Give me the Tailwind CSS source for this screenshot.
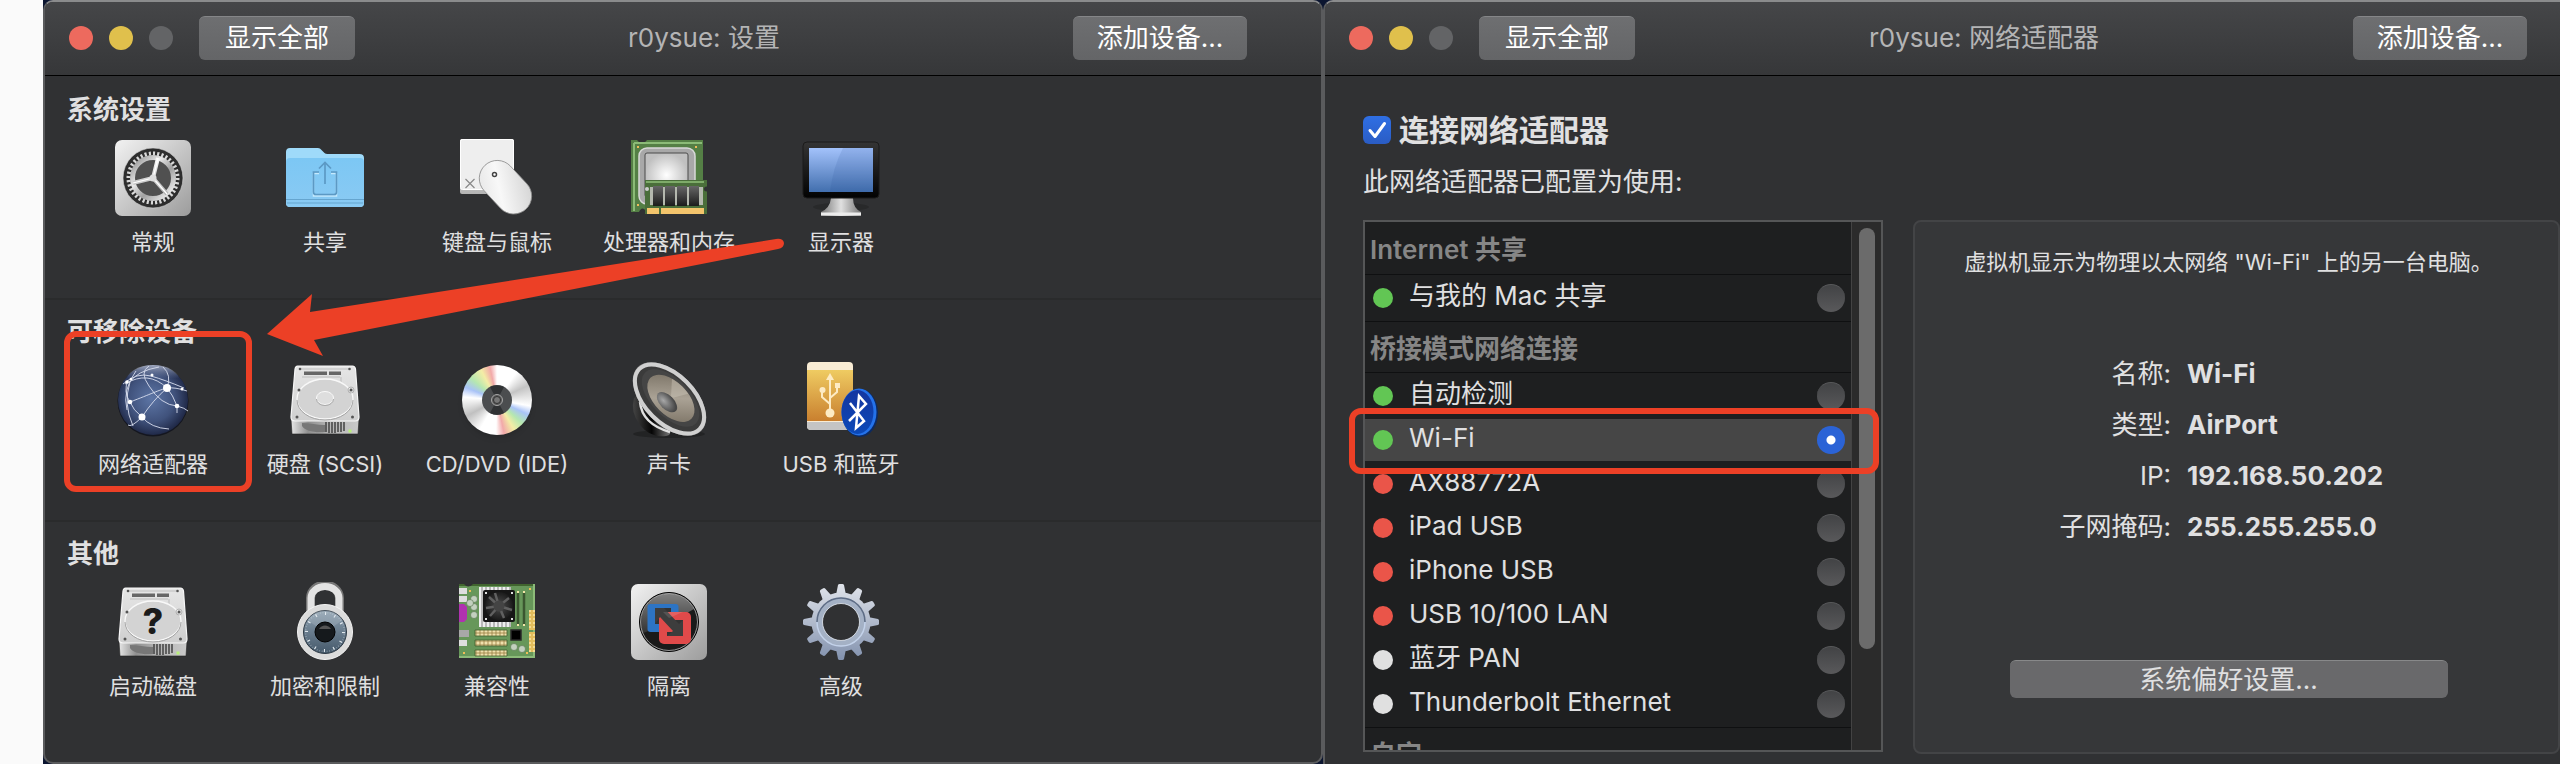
<!DOCTYPE html>
<html lang="zh-CN">
<head>
<meta charset="utf-8">
<meta name="viewport" content="width=device-width, initial-scale=1">
<title>r0ysue: 设置</title>
<script src="https://cdn.jsdelivr.net/npm/@tailwindcss/browser@4"></script>
</head>
<body class="flex min-h-screen overflow-x-hidden bg-[#0b1530] font-[Inter,'Noto_Sans_CJK_SC',sans-serif] text-[#e0e0e1]">

<!-- Shared gradients and symbols -->
<svg class="absolute size-0" aria-hidden="true">
  <defs>
    <linearGradient id="plate" x1="0" y1="0" x2="1" y2="1"><stop offset="0" stop-color="#f2f2f2"/><stop offset="1" stop-color="#9c9c9c"/></linearGradient>
    <linearGradient id="metal" x1="0" y1="0" x2="0" y2="1"><stop offset="0" stop-color="#fafafa"/><stop offset="1" stop-color="#b4b4b4"/></linearGradient>
    <linearGradient id="mouse" x1="0" y1="1" x2="1" y2="0"><stop offset="0" stop-color="#e4e4e4"/><stop offset=".4" stop-color="#f8f8f8"/><stop offset="1" stop-color="#cfcfcf"/></linearGradient>
    <linearGradient id="wheel" x1="0" y1="0" x2="1" y2="1"><stop offset="0" stop-color="#8a8a8a"/><stop offset=".35" stop-color="#e8e8e8"/><stop offset=".6" stop-color="#a0a0a0"/><stop offset="1" stop-color="#fff"/></linearGradient>
    <linearGradient id="folder" x1="0" y1="0" x2="0" y2="1"><stop offset="0" stop-color="#7cc7f4"/><stop offset="1" stop-color="#8acaf3"/></linearGradient>
    <linearGradient id="screen" x1="0" y1="0" x2="0" y2="1"><stop offset="0" stop-color="#a3c2fb"/><stop offset="1" stop-color="#426fae"/></linearGradient>
    <linearGradient id="bezel" x1="0" y1="0" x2="0" y2="1"><stop offset="0" stop-color="#343434"/><stop offset="1" stop-color="#020202"/></linearGradient>
    <linearGradient id="stand" x1="0" y1="0" x2="1" y2="0"><stop offset="0" stop-color="#777"/><stop offset=".5" stop-color="#e0e0e0"/><stop offset="1" stop-color="#777"/></linearGradient>
    <radialGradient id="die"><stop offset="0" stop-color="#fff"/><stop offset="1" stop-color="#c0c0c0"/></radialGradient>
    <linearGradient id="chip" x1="0" y1="0" x2="0" y2="1"><stop offset="0" stop-color="#666"/><stop offset="1" stop-color="#1c1c1c"/></linearGradient>
    <radialGradient id="globe" cx=".48" cy=".48" r=".55"><stop offset="0" stop-color="#5d76a6"/><stop offset=".6" stop-color="#40527c"/><stop offset="1" stop-color="#1b2340"/></radialGradient>
    <linearGradient id="globeTop" x1="0" y1="0" x2="0" y2="1"><stop offset="0" stop-color="#d7def0" stop-opacity=".7"/><stop offset=".4" stop-color="#8fa0c8" stop-opacity="0"/></linearGradient>
    <linearGradient id="disk" x1="0" y1="0" x2="0" y2="1"><stop offset="0" stop-color="#e6e6e6"/><stop offset="1" stop-color="#cfcfcf"/></linearGradient>
    <linearGradient id="diskFront" x1="0" y1="0" x2="1" y2="0"><stop offset="0" stop-color="#e6e6e6"/><stop offset=".25" stop-color="#8f8f8f"/><stop offset=".55" stop-color="#b4b4b4"/><stop offset="1" stop-color="#c9c9c9"/></linearGradient>
    <linearGradient id="cone" x1="0" y1=".2" x2="1" y2=".8"><stop offset="0" stop-color="#7a7265"/><stop offset=".5" stop-color="#aaa295"/><stop offset="1" stop-color="#7d7466"/></linearGradient>
    <radialGradient id="cap" cx=".35" cy=".6" r=".6"><stop offset="0" stop-color="#a8a8a8"/><stop offset="1" stop-color="#484848"/></radialGradient>
    <linearGradient id="magnet" x1="0" y1="0" x2="1" y2="0"><stop offset="0" stop-color="#444"/><stop offset=".5" stop-color="#050505"/><stop offset="1" stop-color="#777"/></linearGradient>
    <linearGradient id="usb" x1="0" y1="0" x2="0" y2="1"><stop offset="0" stop-color="#efcb62"/><stop offset="1" stop-color="#c9802f"/></linearGradient>
    <linearGradient id="bt" x1="0" y1="0" x2="0" y2="1"><stop offset="0" stop-color="#1436a0"/><stop offset="1" stop-color="#0b49b8"/></linearGradient>
    <linearGradient id="dial" x1="0" y1="0" x2="0" y2="1"><stop offset="0" stop-color="#8da0b0"/><stop offset="1" stop-color="#44586a"/></linearGradient>
    <linearGradient id="steel" x1="0" y1="0" x2="0" y2="1"><stop offset="0" stop-color="#e3e6ec"/><stop offset="1" stop-color="#7f8fac"/></linearGradient>
    <radialGradient id="fan"><stop offset="0" stop-color="#555"/><stop offset=".35" stop-color="#3c3c3c"/><stop offset="1" stop-color="#1b1b1b"/></radialGradient>
    <linearGradient id="glass" x1="0" y1="0" x2="0" y2="1"><stop offset="0" stop-color="#fff" stop-opacity=".45"/><stop offset="1" stop-color="#fff" stop-opacity=".1"/></linearGradient>
    <pattern id="pins" width="4" height="4" patternUnits="userSpaceOnUse"><rect width="4" height="4" fill="#cdb980"/><rect width="2" height="2" fill="#efe0ae"/><rect x="2" y="2" width="2" height="2" fill="#b5a069"/></pattern>
    <pattern id="pinsGold" width="4" height="4" patternUnits="userSpaceOnUse"><rect width="4" height="4" fill="#e3bd5c"/><rect width="2" height="2" fill="#f4db93"/></pattern>
    <symbol id="drive" viewBox="0 0 80 80">
      <path d="M6 59h68l-1 15H7z" fill="url(#diskFront)" stroke="#222" stroke-width=".6"/>
      <path d="M17 63c8 0 15 2 23 2v7c-10 1-20-1-23-6z" fill="#777"/>
      <g stroke="#3a3a3a" stroke-width="1.4"><path d="M41 62v10M44 62v11M47 62v11M50 62v11M53 62v10M56 62v10M59 62v9"/></g>
      <path d="M12.500 6h55Q70 6 70.500 9L74 57Q74 61 70 61H10Q6 61 6 57L10 9Q10.500 6 12.500 6z" fill="url(#disk)" stroke="#f7f7f7" stroke-width="1.200"/>
      <path d="M16 9h47M17 17h38M56 17v8" stroke="#bdbdbd" fill="none"/>
      <path d="M19 11.500h23v3.500H19zM44 11.500h12v3.500H44z" fill="#666"/>
      <ellipse cx="40" cy="39" rx="28" ry="20" fill="#d3d3d3" stroke="#f8f8f8" stroke-width="1.300"/>
      <path d="M12 40a28 20 0 0 0 56 0" fill="none" stroke="#a3a3a3"/>
      <g fill="#555"><circle cx="15" cy="9" r="1.300"/><circle cx="64.500" cy="9" r="1.300"/><circle cx="14" cy="30" r="1.500"/><circle cx="66" cy="30" r="1.500"/><circle cx="12" cy="57" r="1.500"/><circle cx="67.500" cy="57" r="1.500"/></g>
      <circle cx="66" cy="30" r="3" fill="none" stroke="#aaa" stroke-width=".8"/>
      <rect x="63.500" y="69.500" width="3" height="3" fill="#b8f07a"/>
    </symbol>
  </defs>
</svg>

<div class="w-[43px] shrink-0 bg-[#fafafa]"></div>

<!-- Settings window -->
<section class="relative flex w-1/2 shrink-0 flex-col overflow-hidden rounded-[10px] border-2 border-[#5a5b5d] border-t-[#8a8b8c] bg-[#303133]">
  <header class="flex h-[74px] shrink-0 items-center border-b border-black bg-linear-to-b from-[#454648] to-[#363739] pb-0.5 pl-6 pr-[74px]">
    <div class="flex gap-4">
      <button type="button" aria-label="关闭" class="size-6 rounded-full bg-[#ed6a5e]"></button>
      <button type="button" aria-label="最小化" class="size-6 rounded-full bg-[#e0c04c]"></button>
      <button type="button" aria-label="缩放" disabled class="size-6 rounded-full bg-[#636466]"></button>
    </div>
    <button type="button" class="ml-[26px] h-11 w-[156px] rounded-md border-t border-[#858688] bg-linear-to-b from-[#6e6f71] to-[#646567] text-[26px] leading-8 text-white">显示全部</button>
    <h1 class="flex-1 pr-5 text-center text-[26px] leading-8 text-[#b4b4b5]">r0ysue: 设置</h1>
    <button type="button" class="h-11 w-[174px] rounded-md border-t border-[#858688] bg-linear-to-b from-[#6e6f71] to-[#646567] text-[26px] leading-8 text-white">添加设备...</button>
  </header>

  <div class="h-[222px] pl-[22px] pt-5">
    <h2 class="text-[26px] font-bold leading-7">系统设置</h2>
    <div class="mt-[14px] flex">
      <button type="button" class="flex w-[172px] flex-col items-center gap-2.5 text-[22px] leading-7 whitespace-nowrap">
        <svg class="size-20" viewBox="0 0 80 80" aria-hidden="true">
          <rect x="2" y="2" width="76" height="76" rx="7" fill="url(#plate)"/>
          <circle cx="40" cy="40" r="30" fill="#2d2d2d" stroke="#d8d8d8" stroke-width=".6"/>
          <circle cx="40" cy="40" r="24.500" fill="none" stroke="#d9d9d9" stroke-width="4" pathLength="72" stroke-dasharray="1 1"/>
          <circle cx="40" cy="40" r="20.500" fill="#505050" stroke="url(#wheel)" stroke-width="5"/>
          <path d="M40 40L45 20M40 40L20 45M40 40L54 56" stroke="url(#metal)" stroke-width="4"/>
          <path d="M40 40l5-20M40 40L20 45M40 40l14 16" stroke="#fff" stroke-width="1.200"/>
          <circle cx="40" cy="40" r="3.500" fill="#ddd"/>
        </svg>常规
      </button>
      <button type="button" class="flex w-[172px] flex-col items-center gap-2.5 text-[22px] leading-7 whitespace-nowrap">
        <svg class="size-20" viewBox="0 0 80 80" aria-hidden="true">
          <path d="M1 14q0-4 4-4h28q2 0 3.500 2l3 3q1 1 3 1h32q4.500 0 4.500 4v45q0 4-4 4H5q-4 0-4-4z" fill="#9fdafa"/>
          <path d="M1 24q0-4 4-4h70q4 0 4 4v41q0 4-4 4H5q-4 0-4-4z" fill="url(#folder)"/>
          <path d="M1 61.500h78M2 65h76" stroke="#65a5cf"/>
          <g fill="none" stroke="#c5e9fd" stroke-width="1.500"><path d="M34 35.500h-5.500v22.500h23V35.500H46"/></g>
          <g fill="none" stroke="#5c99c4" stroke-width="1.700"><path d="M34 34h-5.500v20q0 2.500 2.500 2.500h18q2.500 0 2.500-2.500V34H46M40 46V24.500M34 30.500l6-6 6 6"/></g>
        </svg>共享
      </button>
      <button type="button" class="flex w-[172px] flex-col items-center gap-2.5 text-[22px] leading-7 whitespace-nowrap">
        <svg class="size-20" viewBox="0 0 80 80" aria-hidden="true">
          <rect x="3" y="1" width="54" height="55" rx="2" fill="url(#metal)"/>
          <rect x="3.500" y="1.500" width="53" height="50" rx="2" fill="#eee" stroke="#fff"/>
          <path d="M8.500 41l9 9M17.500 41l-9 9" stroke="#888" stroke-width="1.200"/>
          <g transform="rotate(47 48.500 48.500)"><rect x="19" y="31" width="60" height="36" rx="18" fill="url(#mouse)" stroke="#8d8d8d" stroke-width=".8"/></g>
          <circle cx="37.500" cy="36.500" r="2" fill="#fff" stroke="#444" stroke-width="1.500"/>
        </svg>键盘与鼠标
      </button>
      <button type="button" class="flex w-[172px] flex-col items-center gap-2.5 text-[22px] leading-7 whitespace-nowrap">
        <svg class="size-20" viewBox="0 0 80 80" aria-hidden="true">
          <path d="M2 2h6q5 7 10 0h56v72H18q-5-7-8 0H2z" fill="#547f45"/>
          <path d="M5 5h68M5 5v68" stroke="#8bbb77" stroke-width="2" fill="none"/>
          <g fill="#eebb5c"><path d="M8 8h2v2H8zM66 8h2v2h-2zM8 66h2v2H8z"/></g>
          <rect x="10" y="10" width="56" height="56" rx="8" fill="#a8a8a8" stroke="#d8d8d8" stroke-width="1.500"/>
          <rect x="16" y="15" width="43" height="44" rx="2" fill="url(#die)" stroke="#4b4b4b"/>
          <rect x="16" y="42" width="62" height="34" fill="#4a6e3a"/>
          <rect x="17" y="43" width="58" height="2" fill="#7eab69"/>
          <path d="M21 49h53v18H21z" fill="#b4b8ae"/>
          <g fill="url(#chip)"><rect x="24" y="48" width="10" height="20"/><rect x="36" y="48" width="10" height="20"/><rect x="48" y="48" width="10" height="20"/><rect x="60" y="48" width="10" height="20"/></g>
          <path d="M18 70h12v6H18zM32 70h43v6H32z" fill="#f3c46c"/>
          <circle cx="18" cy="51" r="2" fill="#ccc"/><circle cx="77.500" cy="51" r="2.500" fill="#303133"/>
        </svg>处理器和内存
      </button>
      <button type="button" class="flex w-[172px] flex-col items-center gap-2.5 text-[22px] leading-7 whitespace-nowrap">
        <svg class="size-20" viewBox="0 0 80 80" aria-hidden="true">
          <ellipse cx="40" cy="69" rx="28" ry="4" fill="#28292a"/>
          <path d="M30 60h22q0 10 8 14v4H20v-4q9-4 10-14z" fill="url(#stand)"/>
          <path d="M20 74.500h40v3H20z" fill="#ececec"/>
          <rect x="2" y="4" width="76" height="56" rx="4" fill="url(#bezel)" stroke="#1b1b1b"/>
          <rect x="8" y="10" width="64" height="44" fill="url(#screen)"/>
          <path d="M42 10h30v44H29q3-25 13-44z" fill="#234f94" opacity=".13"/>
        </svg>显示器
      </button>
    </div>
  </div>

  <div class="h-[222px] border-t-2 border-[#2a2b2c] bg-[#2e2f31] pl-[22px] pt-[18px]">
    <h2 class="text-[26px] font-bold leading-7">可移除设备</h2>
    <div class="mt-[14px] flex">
      <button type="button" class="relative flex w-[172px] flex-col items-center gap-2.5 text-[22px] leading-7 whitespace-nowrap">
        <svg class="size-20" viewBox="0 0 80 80" aria-hidden="true">
          <circle cx="40" cy="41" r="35.500" fill="#14161f"/>
          <circle cx="40" cy="40" r="35" fill="url(#globe)"/>
          <ellipse cx="40" cy="22" rx="27" ry="17" fill="url(#globeTop)"/>
          <g fill="none" stroke="#d8deee" stroke-width="1" opacity=".9">
            <path d="M54 28C46 30 38 34 17 42M54 28Q40 40 29 57M54 28Q60 35 64 46M54 28Q35 10 12 24M54 28Q62 27 74 31M54 28Q59 15 50 7M17 42Q10 32 15 20M17 42Q20 50 29 57M29 57Q38 68 56 69M29 57Q18 68 15 65M64 46Q48 45 36 26Q26 12 36 6M64 46Q72 48 75 51M64 46v7M10 24Q24 12 38 16T71 28M14 50Q9 30 23 11M20 66Q10 44 17 22Q24 11 46 7"/>
          </g>
          <g fill="#fff"><circle cx="54" cy="28" r="4"/><circle cx="29" cy="57" r="3.500"/><circle cx="64" cy="46" r="2.300"/><circle cx="17" cy="42" r="2.300"/><circle cx="39" cy="15" r="1.500"/><circle cx="14" cy="22" r="1.800"/><circle cx="18" cy="19" r="1.300"/><circle cx="69" cy="29" r="1.500"/></g>
        </svg>网络适配器
        <span class="absolute -left-[3px] -right-[13px] -top-[29px] h-[161px] rounded-xl border-6 border-[#ec4026]" aria-hidden="true"></span>
      </button>
      <button type="button" class="flex w-[172px] flex-col items-center gap-2.5 text-[22px] leading-7 whitespace-nowrap">
        <svg class="size-20" viewBox="0 0 80 80" aria-hidden="true">
          <use href="#drive"/>
          <ellipse cx="40" cy="38" rx="8.500" ry="6.500" fill="#dedede" stroke="#fafafa"/>
          <path d="M31.500 39a8.500 6.500 0 0 0 17 0" fill="none" stroke="#a8a8a8"/>
        </svg>硬盘 (SCSI)
      </button>
      <button type="button" class="flex w-[172px] flex-col items-center gap-2.5 text-[22px] leading-7 whitespace-nowrap">
        <span class="grid size-20 place-items-center">
          <span class="grid size-[70px] place-items-center rounded-full bg-[conic-gradient(#ffffff,#ffffff_35deg,#c4c4c4_65deg,#ffffff_100deg,#a9c3f7_115deg,#b5e7b0_133deg,#f3eda6_150deg,#f2a9a9_168deg,#ffffff_182deg,#ffffff_210deg,#c0c0c0_242deg,#ffffff_275deg,#a9c3f7_292deg,#b5e7b0_310deg,#f3eda6_332deg,#f2a9a9_348deg,#ffffff_360deg)] shadow-md">
            <svg class="size-[30px]" viewBox="0 0 30 30" aria-hidden="true"><circle cx="15" cy="15" r="15" fill="#4b4d4f"/><path d="M15 15L8 2a15 15 0 0 1 14 0zM15 15l7 13a15 15 0 0 1-14 0z" fill="#303234"/><circle cx="15" cy="15" r="5.500" fill="#555" stroke="#a6a6a6"/><circle cx="15" cy="15" r="3.500" fill="#777" stroke="#333"/></svg>
          </span>
        </span>CD/DVD (IDE)
      </button>
      <button type="button" class="flex w-[172px] flex-col items-center gap-2.5 text-[22px] leading-7 whitespace-nowrap">
        <svg class="size-20" viewBox="0 0 80 80" aria-hidden="true">
          <ellipse cx="40" cy="74" rx="36" ry="4" fill="#222324"/>
          <path d="M5 38q-4 14 6 27t26 11q6-1 4-8L14 32z" fill="url(#magnet)"/>
          <path d="M11 42q2 22 30 30" fill="none" stroke="#e0e0e0" stroke-width="2.500"/>
          <g transform="rotate(45 40.500 39)">
            <ellipse cx="40.500" cy="39" rx="45" ry="26" fill="#8c8c8c"/>
            <ellipse cx="40.500" cy="39" rx="42.500" ry="24" fill="#3b3b3b" stroke="#d0d0d0" stroke-width="4"/>
            <ellipse cx="40.500" cy="37.500" rx="36" ry="19" fill="#454545"/>
            <ellipse cx="41" cy="37.500" rx="29" ry="16.500" fill="url(#cone)"/>
            <path d="M41 37.500L28 23q12-3 22-1z" fill="#cbc5b8" opacity=".45"/>
            <ellipse cx="41" cy="43" rx="12.500" ry="7" fill="url(#cap)"/>
          </g>
        </svg>声卡
      </button>
      <button type="button" class="flex w-[172px] flex-col items-center gap-2.5 text-[22px] leading-7 whitespace-nowrap">
        <svg class="size-20" viewBox="0 0 80 80" aria-hidden="true">
          <rect x="6" y="2" width="46" height="68" rx="4" fill="#f9ecd4"/>
          <path d="M6 62h46v4q0 4-4 4H10q-4 0-4-4z" fill="#c4c4c4"/>
          <path d="M6 10h46v51H6z" fill="url(#usb)"/>
          <g stroke="#fdebc4" stroke-width="2" fill="none"><path d="M29 52V18M29 44l-8-7v-7M29 38l7-6v-8"/></g>
          <g fill="#fdebc4"><path d="M29 13l4 7h-8z"/><circle cx="29" cy="53" r="4.500"/><circle cx="21.500" cy="30" r="3"/><path d="M34 23h5v5h-5z"/></g>
          <ellipse cx="59" cy="53" rx="18" ry="24" fill="#0b2a63"/>
          <ellipse cx="58" cy="52" rx="17.500" ry="23.500" fill="#2472ea"/>
          <ellipse cx="56.500" cy="52" rx="16" ry="22" fill="url(#bt)"/>
          <path d="M49 43l14 18-8 7 3-32 7 8-17 17" fill="none" stroke="#fff" stroke-width="2.500"/>
        </svg>USB 和蓝牙
      </button>
    </div>
  </div>

  <div class="flex-1 border-t-2 border-[#2a2b2c] pl-[22px] pt-[18px]">
    <h2 class="text-[26px] font-bold leading-7">其他</h2>
    <div class="mt-[14px] flex">
      <button type="button" class="flex w-[172px] flex-col items-center gap-2.5 text-[22px] leading-7 whitespace-nowrap">
        <svg class="size-20" viewBox="0 0 80 80" aria-hidden="true">
          <use href="#drive"/>
          <text x="40" y="52" text-anchor="middle" font-family="Inter" font-weight="800" font-size="36" fill="#1b1b1b">?</text>
        </svg>启动磁盘
      </button>
      <button type="button" class="flex w-[172px] flex-col items-center gap-2.5 text-[22px] leading-7 whitespace-nowrap">
        <svg class="size-20" viewBox="0 0 80 80" aria-hidden="true">
          <path d="M25.500 34V16a14.500 13 0 0 1 29 0v18" fill="none" stroke="#777" stroke-width="9"/>
          <path d="M26 34V16a14 11.500 0 0 1 28 0v18" fill="none" stroke="#e3e3e3" stroke-width="7"/>
          <circle cx="40" cy="50" r="27.500" fill="#dcdcdc" stroke="#f4f4f4"/>
          <circle cx="40" cy="50" r="21.500" fill="url(#dial)" stroke="#2d3a46"/>
          <path d="M40 50L22 38a21 21 0 0 1 36 0z" fill="#fff" opacity=".14"/>
          <circle cx="40" cy="50" r="18.500" fill="none" stroke="#e4ebf0" stroke-width="3" pathLength="120" stroke-dasharray="1.200 8.800"/>
          <circle cx="40" cy="50" r="19.500" fill="none" stroke="#c9d4dc" stroke-width="1.500" pathLength="120" stroke-dasharray=".8 1.700" opacity=".5"/>
          <circle cx="40" cy="50" r="10" fill="#15191c" stroke="#000"/>
          <path d="M34 47a7 7 0 0 1 12 0z" fill="#555"/>
        </svg>加密和限制
      </button>
      <button type="button" class="flex w-[172px] flex-col items-center gap-2.5 text-[22px] leading-7 whitespace-nowrap">
        <svg class="size-20" viewBox="0 0 80 80" aria-hidden="true">
          <path d="M2 2h76v74H2z" fill="#67975a"/>
          <path d="M2 3h76" stroke="#41652f" stroke-width="2"/><path d="M2 75h76M77 2v74" stroke="#8cbb79" stroke-width="2"/>
          <path d="M7 2q4 5 9 0z" fill="#303133"/>
          <g fill="#dedede"><path d="M2 6h8v6H2zM2 14h8v6H2zM2 58h8v6H2z"/></g><path d="M2 48h10v7H2z" fill="#a8a8a8"/>
          <path d="M2 22h5l3 3v12l-3 3H2z" fill="#b032b0"/>
          <g fill="#c3d0bf" stroke="#53714a" stroke-width=".6"><circle cx="17" cy="17" r="3.500"/><circle cx="17" cy="25" r="3.500"/><circle cx="17" cy="33" r="3.500"/><circle cx="13" cy="21" r="3.500"/><circle cx="57" cy="65" r="3.500"/><circle cx="65" cy="67" r="3.500"/></g>
          <path d="M22 5h32v40H22z" fill="#b8b8b8"/><path d="M22 25h32" stroke="#eee" stroke-width="40" stroke-dasharray="2 2"/>
          <rect x="26" y="8" width="32" height="32" rx="2" fill="#161616"/>
          <circle cx="42" cy="24" r="14" fill="url(#fan)"/>
          <path d="M42 24L38 11M42 24l10-8M42 24l13 4M42 24l5 12M42 24l-9 10M42 24L29 26M42 24L32 15" stroke="#606060" stroke-width="2.500"/><circle cx="42" cy="24" r="5.500" fill="#444"/>
          <g fill="#ddd"><path d="M28 10h2v2h-2zM54 10h2v2h-2zM28 36h2v2h-2zM54 36h2v2h-2z"/></g>
          <path d="M61 11v32M67 11v32" stroke="#3b5630" stroke-width="2.500"/><path d="M60 10h2M66 10h2M60 43h2M66 43h2" stroke="#f3e5a8" stroke-width="2"/>
          <g stroke="#41602f" stroke-width=".8"><path d="M18 48h32v6H18zM18 58h32v6H18zM18 68h32v6H18z" fill="url(#pins)"/></g>
          <path d="M72 28h6v20h-6zM72 50h6v20h-6z" fill="url(#pinsGold)"/>
          <path d="M54 48h10v10H54z" fill="#000" stroke="#2a2a2a" stroke-width="1.500"/>
          <g fill="#f0bd58"><path d="M12 8h2v2h-2zM72 6h2v2h-2zM6 70h2v2H6zM69 70h2v2h-2z"/></g>
        </svg>兼容性
      </button>
      <button type="button" class="flex w-[172px] flex-col items-center gap-2.5 text-[22px] leading-7 whitespace-nowrap">
        <svg class="size-20" viewBox="0 0 80 80" aria-hidden="true">
          <rect x="2" y="2" width="76" height="76" rx="7" fill="url(#plate)"/>
          <circle cx="40" cy="40" r="29.500" fill="#1a1a1a" stroke="#000"/>
          <path d="M12 40a28 28 0 0 1 53-13q-20 12-53 25z" fill="url(#glass)"/>
          <circle cx="40" cy="40" r="28.500" fill="none" stroke="#ccc" stroke-width=".7"/>
          <rect x="18.500" y="22" width="31" height="28" rx="3" fill="#2d74c4"/>
          <rect x="30" y="30" width="32" height="32" rx="5" fill="#e04a4a"/>
          <path d="M26 26h16v4h-8l-4 4v8h-4z" fill="#333"/>
          <path d="M54 38v16H38v-4h8V38z" fill="#333"/>
          <path d="M26 26h9l15 16 4-4v16H38l6-5L31 35l-5 7z" fill="#3d3d3d"/>
          <path d="M34 30h20L40 36z" fill="#fff" opacity=".12"/>
        </svg>隔离
      </button>
      <button type="button" class="flex w-[172px] flex-col items-center gap-2.5 text-[22px] leading-7 whitespace-nowrap">
        <svg class="size-20" viewBox="0 0 80 80" aria-hidden="true">
          <defs><g id="tooth"><path d="M35 13L37 3q.5-1 1.500-1h3q1 0 1.500 1l2 10zM35 67l2 10q.5 1 1.500 1h3q1 0 1.500-1l2-10z"/></g></defs>
          <mask id="hole"><path fill="#fff" d="M0 0h80v80H0z"/><circle cx="40" cy="40" r="18.500" fill="#000"/></mask>
          <mask id="gearShape"><g fill="#fff"><circle cx="40" cy="40" r="29.500"/><use href="#tooth"/><use href="#tooth" transform="rotate(30 40 40)"/><use href="#tooth" transform="rotate(60 40 40)"/><use href="#tooth" transform="rotate(90 40 40)"/><use href="#tooth" transform="rotate(120 40 40)"/><use href="#tooth" transform="rotate(150 40 40)"/></g></mask>
          <g mask="url(#hole)"><g mask="url(#gearShape)"><path d="M0 0h80v80H0z" fill="url(#steel)"/></g>
          <circle cx="40" cy="40" r="21.500" fill="none" stroke="#a4b1c5" stroke-width="6"/>
          <path d="M16 40a24 24 0 0 1 48 0" fill="none" stroke="#5d6c85" stroke-width="1.500"/><path d="M16 40a24 24 0 0 0 48 0" fill="none" stroke="#c3d2ea" stroke-width="1.500"/></g>
          <circle cx="40" cy="40" r="18.500" fill="none" stroke="#e6ebf2" stroke-width=".8"/>
        </svg>高级
      </button>
    </div>
  </div>

  <!-- Pointer from the display icon to the network adapter -->
  <svg class="pointer-events-none absolute left-[222px] top-[235px] h-[120px] w-[520px]" viewBox="0 0 520 120" aria-hidden="true">
    <path d="M0 97L45 57L43 75L509 2Q516 1 517 6Q517 11 511 12L47 103L56 119Z" fill="#ec4026"/>
  </svg>
</section>

<!-- Network adapter window -->
<section class="flex min-w-0 flex-1 flex-col rounded-tl-[10px] border-l-2 border-t-2 border-l-[#5a5b5d] border-t-[#8a8b8c] bg-[#303133]">
  <header class="flex h-[74px] shrink-0 items-center rounded-tl-lg border-b border-black bg-linear-to-b from-[#454648] to-[#363739] pb-0.5 pl-6 pr-[33px]">
    <div class="flex gap-4">
      <button type="button" aria-label="关闭" class="size-6 rounded-full bg-[#ed6a5e]"></button>
      <button type="button" aria-label="最小化" class="size-6 rounded-full bg-[#e0c04c]"></button>
      <button type="button" aria-label="缩放" disabled class="size-6 rounded-full bg-[#636466]"></button>
    </div>
    <button type="button" class="ml-[26px] h-11 w-[156px] rounded-md border-t border-[#858688] bg-linear-to-b from-[#6e6f71] to-[#646567] text-[26px] leading-8 text-white">显示全部</button>
    <h1 class="flex-1 pr-5 text-center text-[26px] leading-8 text-[#b4b4b5]">r0ysue: 网络适配器</h1>
    <button type="button" class="h-11 w-[174px] rounded-md border-t border-[#858688] bg-linear-to-b from-[#6e6f71] to-[#646567] text-[26px] leading-8 text-white">添加设备...</button>
  </header>

  <div class="flex flex-1 flex-col pl-[38px] pt-9">
    <label class="flex items-center gap-2 text-[30px] font-bold leading-9">
      <span class="grid size-7 place-items-center">
        <input type="checkbox" checked class="col-start-1 row-start-1 size-7 appearance-none rounded-md bg-linear-to-b from-[#2f6fe4] to-[#2a5cc4]">
        <svg class="col-start-1 row-start-1 size-7" viewBox="0 0 28 28" fill="none" stroke="#fff" stroke-width="3" stroke-linecap="round" stroke-linejoin="round" aria-hidden="true"><path d="M7 14.500l5 6L21.500 7.500"/></svg>
      </span>连接网络适配器
    </label>
    <p class="mt-4 text-[26px] leading-9">此网络适配器已配置为使用:</p>

    <div class="mt-5 flex items-start gap-[30px]">
      <div class="relative flex h-[532px] w-[520px] shrink-0 border-2 border-[#555657] bg-[#1e1f20]">
        <div class="min-w-0 flex-1 overflow-hidden text-[26px] leading-8">
          <h3 class="h-[53px] border-b border-[#0f1011] pl-[5px] pt-3 font-semibold text-[#868686]">Internet 共享</h3>
          <label class="flex h-[47px] items-center border-b border-[#0f1011] pl-2 pr-1.5">
            <span class="size-5 rounded-full bg-[#62c654]"></span>
            <span class="flex-1 pb-1 pl-4">与我的 Mac 共享</span>
            <input type="radio" name="net" class="size-7 appearance-none rounded-full border-t border-[#58595b] bg-linear-to-b from-[#424345] to-[#59595b]">
          </label>
          <h3 class="h-[51px] border-b border-[#0f1011] pl-[5px] pt-[11px] font-semibold text-[#868686]">桥接模式网络连接</h3>
          <div class="flex flex-col gap-0.5 border-b border-[#0f1011] pb-0.5 pt-0.5">
            <label class="flex h-[42px] items-center pl-2 pr-1.5">
              <span class="size-5 rounded-full bg-[#62c654]"></span>
              <span class="flex-1 pb-1 pl-4">自动检测</span>
              <input type="radio" name="net" class="size-7 appearance-none rounded-full border-t border-[#58595b] bg-linear-to-b from-[#424345] to-[#59595b]">
            </label>
            <label class="flex h-[42px] items-center bg-[#464646] pl-2 pr-1.5">
              <span class="size-5 rounded-full bg-[#62c654]"></span>
              <span class="flex-1 pb-1 pl-4">Wi-Fi</span>
              <input type="radio" name="net" checked class="size-7 appearance-none rounded-full bg-[radial-gradient(circle,#ffffff_0_4px,#2b63d6_5px)]">
            </label>
            <label class="flex h-[42px] items-center pl-2 pr-1.5">
              <span class="size-5 rounded-full bg-[#ea5549]"></span>
              <span class="flex-1 pb-1 pl-4">AX88772A</span>
              <input type="radio" name="net" class="size-7 appearance-none rounded-full border-t border-[#58595b] bg-linear-to-b from-[#424345] to-[#59595b]">
            </label>
            <label class="flex h-[42px] items-center pl-2 pr-1.5">
              <span class="size-5 rounded-full bg-[#ea5549]"></span>
              <span class="flex-1 pb-1 pl-4">iPad USB</span>
              <input type="radio" name="net" class="size-7 appearance-none rounded-full border-t border-[#58595b] bg-linear-to-b from-[#424345] to-[#59595b]">
            </label>
            <label class="flex h-[42px] items-center pl-2 pr-1.5">
              <span class="size-5 rounded-full bg-[#ea5549]"></span>
              <span class="flex-1 pb-1 pl-4">iPhone USB</span>
              <input type="radio" name="net" class="size-7 appearance-none rounded-full border-t border-[#58595b] bg-linear-to-b from-[#424345] to-[#59595b]">
            </label>
            <label class="flex h-[42px] items-center pl-2 pr-1.5">
              <span class="size-5 rounded-full bg-[#ea5549]"></span>
              <span class="flex-1 pb-1 pl-4">USB 10/100 LAN</span>
              <input type="radio" name="net" class="size-7 appearance-none rounded-full border-t border-[#58595b] bg-linear-to-b from-[#424345] to-[#59595b]">
            </label>
            <label class="flex h-[42px] items-center pl-2 pr-1.5">
              <span class="size-5 rounded-full bg-[#e0e0e0]"></span>
              <span class="flex-1 pb-1 pl-4">蓝牙 PAN</span>
              <input type="radio" name="net" class="size-7 appearance-none rounded-full border-t border-[#58595b] bg-linear-to-b from-[#424345] to-[#59595b]">
            </label>
            <label class="flex h-[42px] items-center pl-2 pr-1.5">
              <span class="size-5 rounded-full bg-[#e0e0e0]"></span>
              <span class="flex-1 pb-1 pl-4">Thunderbolt Ethernet</span>
              <input type="radio" name="net" class="size-7 appearance-none rounded-full border-t border-[#58595b] bg-linear-to-b from-[#424345] to-[#59595b]">
            </label>
          </div>
          <h3 class="pl-[5px] pt-[11px] font-semibold text-[#868686]">自定</h3>
        </div>
        <div class="w-[30px] shrink-0 border-l border-[#434343] bg-[#2b2b2b] pl-[7px] pt-1.5">
          <div class="h-[421px] w-4 rounded-full bg-[#6b6b6b]"></div>
        </div>
        <span class="pointer-events-none absolute -left-4 right-0.5 top-[186px] h-[66px] rounded-xl border-6 border-[#ec4026]" aria-hidden="true"></span>
      </div>

      <div class="flex h-[534px] min-w-0 flex-1 flex-col items-center rounded-lg border-2 border-[#434446] bg-[#363739] pr-4">
        <p class="mt-6 text-[22px] leading-8 whitespace-nowrap">虚拟机显示为物理以太网络 "Wi-Fi" 上的另一台电脑。</p>
        <dl class="mt-[78px] grid w-full grid-cols-[256px_1fr] gap-x-4 gap-y-[15px] text-[26px] leading-9">
          <dt class="text-right">名称:</dt><dd class="font-bold">Wi-Fi</dd>
          <dt class="text-right">类型:</dt><dd class="font-bold">AirPort</dd>
          <dt class="text-right">IP:</dt><dd class="font-bold">192.168.50.202</dd>
          <dt class="text-right">子网掩码:</dt><dd class="font-bold">255.255.255.0</dd>
        </dl>
        <button type="button" class="mt-[115px] h-[38px] w-[438px] rounded-md border-t border-[#88898a] bg-[#69696b] text-[26px] leading-8">系统偏好设置...</button>
      </div>
    </div>
  </div>
</section>
</body>
</html>
